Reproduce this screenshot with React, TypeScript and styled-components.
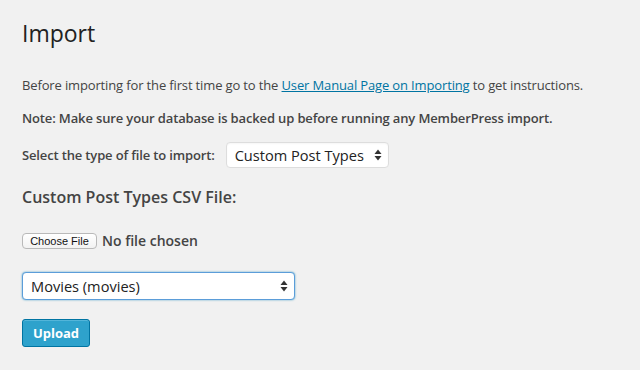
import styled, { createGlobalStyle } from 'styled-components'

const Global = createGlobalStyle`
  html, body {
    margin: 0;
    background: #f1f1f1;
  }
  body {
    font-family: "Open Sans", "Noto Sans", sans-serif;
    color: #444;
    font-size: 13px;
  }
`

const Wrap = styled.div`
  padding: 19px 22px 20px 22px;
`

const Title = styled.h1`
  margin: 0 0 28px 0;
  font-size: 23px;
  line-height: 29px;
  font-weight: 400;
  color: #222;
`

const Para = styled.p<{ $bold?: boolean }>`
  margin: 0 0 15px 0;
  font-size: 13px;
  line-height: 18px;
  letter-spacing: -0.14px;
  font-weight: ${(p) => (p.$bold ? 600 : 400)};
`

const Link = styled.a`
  color: #0074a2;
  text-decoration: underline;
`

const Row = styled.div`
  display: flex;
  align-items: center;
  gap: 11px;
  margin-top: 14px;
`

const Label = styled.span`
  font-size: 13px;
  letter-spacing: -0.15px;
  font-weight: 600;
`

const SelectBox = styled.div<{ $width: number; $focus?: boolean }>`
  box-sizing: border-box;
  width: ${(p) => p.$width}px;
  height: ${(p) => (p.$focus ? 28 : 26)}px;
  display: flex;
  align-items: center;
  justify-content: space-between;
  padding: 0 6px 0 8px;
  background: #fff;
  border: 1px solid ${(p) => (p.$focus ? '#5b9dd9' : '#ddd')};
  border-radius: 4px;
  box-shadow: ${(p) =>
    p.$focus ? '0 0 2px rgba(30, 140, 190, 0.8)' : 'inset 0 1px 2px rgba(0,0,0,0.04)'};
  font-size: 14.6px;
  color: #222;
`

const Heading = styled.h3`
  margin: 18px 0 0 0;
  font-size: 16px;
  line-height: 22px;
  font-weight: 600;
  color: #444;
`

const FileRow = styled.div`
  display: flex;
  align-items: center;
  gap: 5px;
  margin-top: 23px;
`

const FileButton = styled.button`
  box-sizing: border-box;
  height: 16px;
  width: 75px;
  padding: 0;
  font-family: "Liberation Sans", Arial, sans-serif;
  font-size: 11px;
  color: #111;
  background: linear-gradient(#fff, #f2f2f2);
  border: 1px solid #b9b9b9;
  border-radius: 4px;
`

const NoFile = styled.span`
  font-size: 14px;
  font-weight: 600;
  color: #444;
`

const Field = styled.div`
  margin-top: 22px;
`

const UploadButton = styled.button`
  margin-top: 19px;
  box-sizing: border-box;
  width: 68px;
  height: 28px;
  padding: 0;
  font-family: "Open Sans", sans-serif;
  font-size: 13px;
  font-weight: 700;
  color: #fff;
  background: #2ea2cc;
  border: 1px solid #0074a2;
  border-radius: 3px;
  box-shadow: inset 0 1px 0 rgba(120, 200, 230, 0.5);
`

function Arrows () {
  return (
    <svg width='8' height='12' viewBox='0 0 8 12'>
      <path d='M4 0.5 L7.5 5 L0.5 5 Z' fill='#333' />
      <path d='M4 11.5 L7.5 7 L0.5 7 Z' fill='#333' />
    </svg>
  )
}

export default function App () {
  return (
    <>
      <Global />
      <Wrap>
        <Title>Import</Title>
        <Para>
          Before importing for the first time go to the{' '}
          <Link href='#'>User Manual Page on Importing</Link> to get instructions.
        </Para>
        <Para $bold>
          Note: Make sure your database is backed up before running any MemberPress import.
        </Para>
        <Row>
          <Label>Select the type of file to import:</Label>
          <SelectBox $width={163}>
            <span>Custom Post Types</span>
            <Arrows />
          </SelectBox>
        </Row>
        <Heading>Custom Post Types CSV File:</Heading>
        <FileRow>
          <FileButton type='button'>Choose File</FileButton>
          <NoFile>No file chosen</NoFile>
        </FileRow>
        <Field>
          <SelectBox $width={273} $focus>
            <span>Movies (movies)</span>
            <Arrows />
          </SelectBox>
        </Field>
        <UploadButton type='button'>Upload</UploadButton>
      </Wrap>
    </>
  )
}
